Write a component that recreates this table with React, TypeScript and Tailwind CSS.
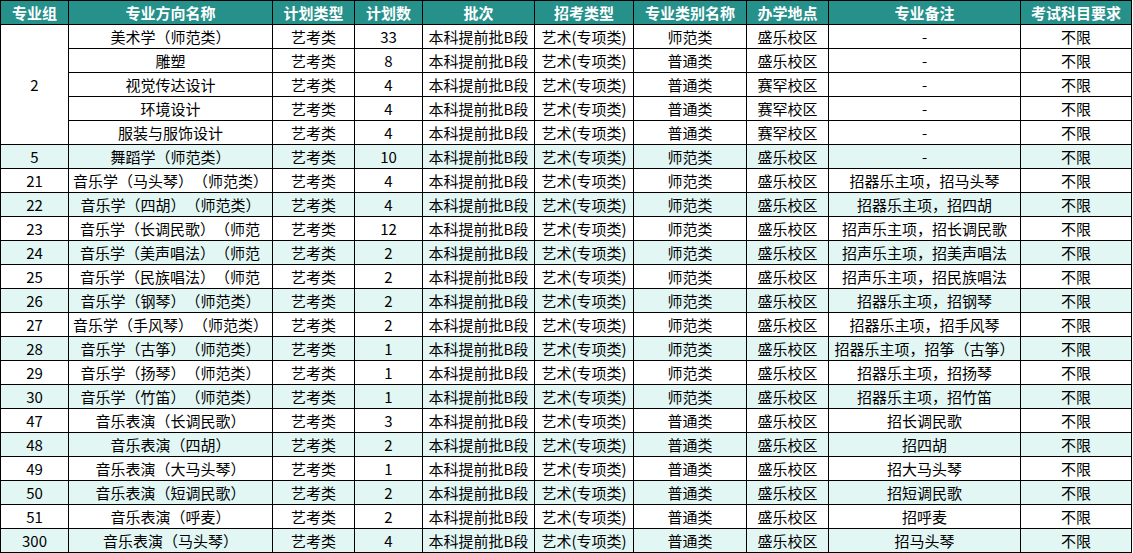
import * as React from 'react';

type Row = {
    group: string;
    name: string;
    count: number;
    category: string;
    campus: string;
    note: string;
    clip?: boolean;
};

const HEADERS = ['专业组', '专业方向名称', '计划类型', '计划数', '批次', '招考类型', '专业类别名称', '办学地点', '专业备注', '考试科目要求'];

const GROUP_TWO: Row[] = [
    { group: '2', name: '美术学（师范类）', count: 33, category: '师范类', campus: '盛乐校区', note: '-' },
    { group: '2', name: '雕塑', count: 8, category: '普通类', campus: '盛乐校区', note: '-' },
    { group: '2', name: '视觉传达设计', count: 4, category: '普通类', campus: '赛罕校区', note: '-' },
    { group: '2', name: '环境设计', count: 4, category: '普通类', campus: '赛罕校区', note: '-' },
    { group: '2', name: '服装与服饰设计', count: 4, category: '普通类', campus: '赛罕校区', note: '-' }
];

// names of 23-25 are cut in the sheet, only the visible part is kept
const ROWS: Row[] = [
    { group: '5', name: '舞蹈学（师范类）', count: 10, category: '师范类', campus: '盛乐校区', note: '-' },
    { group: '21', name: '音乐学（马头琴）（师范类）', count: 4, category: '师范类', campus: '盛乐校区', note: '招器乐主项，招马头琴' },
    { group: '22', name: '音乐学（四胡）（师范类）', count: 4, category: '师范类', campus: '盛乐校区', note: '招器乐主项，招四胡' },
    { group: '23', name: '音乐学（长调民歌）（师范', count: 12, category: '师范类', campus: '盛乐校区', note: '招声乐主项，招长调民歌', clip: true },
    { group: '24', name: '音乐学（美声唱法）（师范', count: 2, category: '师范类', campus: '盛乐校区', note: '招声乐主项，招美声唱法', clip: true },
    { group: '25', name: '音乐学（民族唱法）（师范', count: 2, category: '师范类', campus: '盛乐校区', note: '招声乐主项，招民族唱法', clip: true },
    { group: '26', name: '音乐学（钢琴）（师范类）', count: 2, category: '师范类', campus: '盛乐校区', note: '招器乐主项，招钢琴' },
    { group: '27', name: '音乐学（手风琴）（师范类）', count: 2, category: '师范类', campus: '盛乐校区', note: '招器乐主项，招手风琴' },
    { group: '28', name: '音乐学（古筝）（师范类）', count: 1, category: '师范类', campus: '盛乐校区', note: '招器乐主项，招筝（古筝）' },
    { group: '29', name: '音乐学（扬琴）（师范类）', count: 1, category: '师范类', campus: '盛乐校区', note: '招器乐主项，招扬琴' },
    { group: '30', name: '音乐学（竹笛）（师范类）', count: 1, category: '师范类', campus: '盛乐校区', note: '招器乐主项，招竹笛' },
    { group: '47', name: '音乐表演（长调民歌）', count: 3, category: '普通类', campus: '盛乐校区', note: '招长调民歌' },
    { group: '48', name: '音乐表演（四胡）', count: 2, category: '普通类', campus: '盛乐校区', note: '招四胡' },
    { group: '49', name: '音乐表演（大马头琴）', count: 1, category: '普通类', campus: '盛乐校区', note: '招大马头琴' },
    { group: '50', name: '音乐表演（短调民歌）', count: 2, category: '普通类', campus: '盛乐校区', note: '招短调民歌' },
    { group: '51', name: '音乐表演（呼麦）', count: 2, category: '普通类', campus: '盛乐校区', note: '招呼麦' },
    { group: '300', name: '音乐表演（马头琴）', count: 4, category: '普通类', campus: '盛乐校区', note: '招马头琴' }
];

const CELL = 'flex items-center justify-center overflow-hidden whitespace-nowrap';

function Cells({ row, bg, withGroup }: { row: Row; bg: string; withGroup: boolean }) {
    const cell = `${CELL} ${bg}`;
    return (
        <React.Fragment>
            {withGroup ? <div className={cell}>{row.group}</div> : null}
            <div className={row.clip ? `flex items-center justify-start whitespace-nowrap pl-[11px] ${bg}` : cell}>{row.name}</div>
            <div className={cell}>艺考类</div>
            <div className={cell}>{row.count}</div>
            <div className={cell}>本科提前批B段</div>
            <div className={cell}>艺术(专项类)</div>
            <div className={cell}>{row.category}</div>
            <div className={cell}>{row.campus}</div>
            <div className={cell}>{row.note}</div>
            <div className={cell}>不限</div>
        </React.Fragment>
    );
}

export default function App() {
    return (
        <div className="h-[553px] w-[1133px] bg-white">
            <div
                className="inline-grid grid-cols-[67px_203px_81px_67px_111px_98px_112px_81px_191px_110px] grid-rows-[repeat(23,23px)] gap-px bg-black p-px text-[15px] leading-none text-black [text-spacing-trim:space-all]"
                style={{ fontFamily: '"Noto Sans CJK SC", "Noto Sans", sans-serif' }}
            >
                {HEADERS.map((title) => (
                    <div key={title} className={`${CELL} bg-[#26908a] font-bold text-white`}>
                        {title}
                    </div>
                ))}

                <div className={`${CELL} row-span-5 bg-white`}>2</div>
                {GROUP_TWO.map((row) => (
                    <Cells key={row.name} row={row} bg="bg-white" withGroup={false} />
                ))}

                {ROWS.map((row, index) => (
                    <Cells key={row.group} row={row} bg={index % 2 === 0 ? 'bg-[#e2f6f4]' : 'bg-white'} withGroup />
                ))}
            </div>
        </div>
    );
}
